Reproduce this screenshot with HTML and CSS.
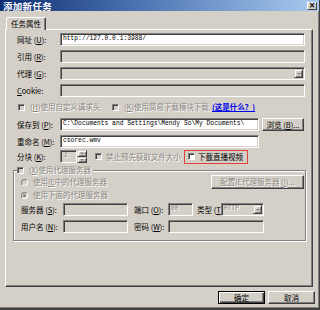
FILE: index.html
```html
<!DOCTYPE html>
<html>
<head>
<meta charset="utf-8">
<title>添加新任务</title>
<link rel="stylesheet" href="styles.css">
</head>
<body>
<div class="window">
  <div class="titlebar">
    <span class="title">添加新任务</span>
    <span class="close">×</span>
  </div>
  <div class="tabs"><div class="tab">任务属性</div></div>
  <div class="panel">
    <div class="form">
      <span class="lbl">网址 (<u>U</u>):</span>
      <div class="field white"><span class="mono">http://127.0.0.1:3988/</span></div>
      <span class="lbl">引用 (<u>R</u>):</span>
      <div class="field"></div>
      <span class="lbl">代理 (<u>G</u>):</span>
      <div class="field combo"><span class="arrow"><i class="tri dis-tri"></i></span></div>
      <span class="lbl"><u>C</u>ookie:</span>
      <div class="field"></div>
    </div>

    <div class="checkrow">
      <div class="citem first"><span class="cb"></span><span class="dis">(<u>H</u>)使用自定义请求头</span></div>
      <div class="citem"><span class="cb"></span><span class="dis">(<u>K</u>)使用简易下载模块下载</span></div>
      <a class="link">(这是什么？)</a>
    </div>

    <div class="row r-save">
      <span class="lbl">保存到 (<u>P</u>):</span>
      <div class="field white w199"><span class="mono">C:\Documents and Settings\Mendy So\My Documents\</span></div>
      <span class="btn browse">浏览 (<u>B</u>)...</span>
    </div>

    <div class="row r-rename">
      <span class="lbl">重命名 (<u>M</u>):</span>
      <div class="field white w199"><span class="mono">csorec.wmv</span></div>
    </div>

    <div class="row r-split">
      <span class="lbl">分块 (<u>K</u>):</span>
      <div class="spin">
        <div class="field spinfield"><span class="dis mono">1</span></div>
        <div class="spinbtns">
          <span class="sbtn"><i class="tri up dis-tri"></i></span>
          <span class="sbtn"><i class="tri dis-tri"></i></span>
        </div>
      </div>
      <div class="citem nosize"><span class="cb"></span><span class="dis">禁止预先获取文件大小</span></div>
      <div class="highlight"><span class="cb white-cb"></span><span class="live">下載直播视频</span></div>
    </div>

    <fieldset class="group">
      <legend><span class="cb"></span><span class="dis">(<u>X</u>)使用代理服务器</span></legend>
      <div class="grow g1">
        <span class="radio"></span><span class="dis">使用<u>IE</u>中的代理服务器</span>
        <span class="btn cfg dis">配置IE代理服务器 (<u>I</u>)...</span>
      </div>
      <div class="grow g2">
        <span class="radio on"></span><span class="dis">使用下面的代理服务器</span>
      </div>
      <div class="grow g3">
        <span class="glbl">服务器 (<u>S</u>):</span>
        <div class="field w65"></div>
        <span class="plbl">端口 (<u>O</u>):</span>
        <div class="field w25"><span class="dis mono">80</span></div>
        <span class="tlbl">类型 (<u>T</u>):</span>
        <div class="field combo w43"><span class="dis mono">HTTP</span><span class="arrow"><i class="tri dis-tri"></i></span></div>
      </div>
      <div class="grow g4">
        <span class="glbl">用户名 (<u>N</u>):</span>
        <div class="field w65"></div>
        <span class="plbl">密码 (<u>W</u>):</span>
        <div class="field w96"></div>
      </div>
    </fieldset>
  </div>
  <div class="buttons">
    <span class="btn default">确定</span>
    <span class="btn">取消</span>
  </div>
</div>
</body>
</html>
```

FILE: styles.css
```css
* { box-sizing: border-box; }
body {
  margin: 0;
  background: #d4d0c8;
  font-family: "Noto Sans CJK SC", sans-serif;
  font-size: 7.5px;
  line-height: 1;
  color: #000;
}
u { text-decoration: underline; }

.window {
  width: 320px;
  height: 310px;
  border-right: 1px solid #404040;
  border-bottom: 2px solid #404040;
  box-shadow: inset -1px -1px #808080;
}

.titlebar {
  height: 11px;
  background: linear-gradient(90deg, #0e2f74 0%, #4f76b4 45%, #a9cbef 100%);
  display: flex;
  align-items: center;
  justify-content: space-between;
  padding: 0 2px 0 3px;
}
.title {
  color: #fff;
  font-weight: bold;
  font-size: 9.5px;
  line-height: 10px;
  letter-spacing: 0.3px;
}
.close {
  width: 10px;
  height: 8px;
  background: #d4d0c8;
  border: 1px solid;
  border-color: #fff #404040 #404040 #fff;
  font-family: "DejaVu Sans", sans-serif;
  font-size: 8px;
  font-weight: bold;
  line-height: 6px;
  text-align: center;
  color: #000;
}

.tabs {
  padding: 6px 0 0 6px;
  height: 18px;
}
.tab {
  position: relative;
  width: 40px;
  height: 13px;
  background: #d4d0c8;
  border-top: 1px solid #fff;
  border-left: 1px solid #fff;
  border-right: 1px solid #404040;
  border-radius: 2px 2px 0 0;
  box-shadow: inset -1px 0 #808080;
  text-align: center;
  line-height: 11px;
  font-size: 7.5px;
  z-index: 1;
}

.panel {
  margin-left: 5px;
  width: 308px;
  height: 258px;
  border-top: 1px solid #fff;
  border-left: 1px solid #fff;
  border-right: 1px solid #404040;
  border-bottom: 1px solid #404040;
  box-shadow: inset -1px -1px #808080;
  padding: 3px 0 0 11px;
}

.form {
  display: grid;
  grid-template-columns: 43px 245px;
  grid-auto-rows: 13px;
  row-gap: 4px;
  align-items: center;
}

.lbl { white-space: nowrap; }

.field {
  height: 13px;
  border: 1px solid;
  border-color: #808080 #fff #fff #808080;
  box-shadow: inset 1px 1px #404040, inset -1px -1px #d4d0c8;
  background: #d4d0c8;
  padding: 0 2px;
  display: flex;
  align-items: center;
  position: relative;
  overflow: hidden;
}
.field.white { background: #fff; }
.mono {
  font-family: "Liberation Mono", monospace;
  font-size: 6.3px;
  white-space: pre;
}
.combo { justify-content: space-between; padding-right: 1px; }
.arrow {
  margin-left: auto;
  width: 9px;
  height: 9px;
  background: #d4d0c8;
  border: 1px solid;
  border-color: #d4d0c8 #404040 #404040 #d4d0c8;
  box-shadow: inset 1px 1px #fff, inset -1px -1px #808080;
  display: flex;
  align-items: center;
  justify-content: center;
}
.tri {
  width: 0;
  height: 0;
  border-left: 2.5px solid transparent;
  border-right: 2.5px solid transparent;
  border-top: 2.5px solid #000;
}
.tri.up { border-top: 0; border-bottom: 2.5px solid #000; }
.dis-tri { border-top-color: #808080; }
.tri.up.dis-tri { border-bottom-color: #808080; }

.dis {
  color: #8a8780;
  text-shadow: 1px 1px #fff;
}

.checkrow {
  margin-top: 5px;
  height: 10px;
  display: flex;
  align-items: center;
  padding-left: 1px;
}
.citem { display: flex; align-items: center; white-space: nowrap; }
.citem.first { width: 94px; }
.citem .cb { margin-right: 5px; }
.cb {
  width: 7px;
  height: 7px;
  flex: none;
  border: 1px solid;
  border-color: #808080 #fff #fff #808080;
  box-shadow: inset 1px 1px #404040;
  background: #d4d0c8;
}
.white-cb { background: #fff; }
.link {
  margin-left: 3px;
  color: #0000ee;
  text-decoration: underline;
  font-weight: bold;
  white-space: nowrap;
}

.row {
  display: flex;
  align-items: center;
  height: 13px;
}
.row .lbl { width: 43px; flex: none; }
.r-save { margin-top: 6px; }
.r-rename { margin-top: 4px; }
.r-split { margin-top: 2px; }
.w199 { width: 199px; }
.w65 { width: 65px; flex: none; }
.w25 { width: 25px; flex: none; }
.w43 { width: 43px; flex: none; }
.w96 { width: 96px; flex: none; }

.btn {
  display: flex;
  align-items: center;
  justify-content: center;
  height: 13px;
  background: #d4d0c8;
  border: 1px solid;
  border-color: #fff #404040 #404040 #fff;
  box-shadow: inset -1px -1px #808080;
  white-space: nowrap;
}
.browse { width: 42px; margin-left: 3px; }

.spin { display: flex; height: 13px; }
.spinfield { width: 17px; padding-left: 3px; }
.spinbtns { width: 10px; display: flex; flex-direction: column; }
.sbtn {
  flex: 1;
  background: #d4d0c8;
  border: 1px solid;
  border-color: #d4d0c8 #404040 #404040 #d4d0c8;
  box-shadow: inset 1px 1px #fff, inset -1px -1px #808080;
  display: flex;
  align-items: center;
  justify-content: center;
}
.nosize { margin-left: 8px; }
.nosize .cb { margin-right: 4px; }
.highlight {
  margin-left: 3px;
  width: 64px;
  height: 14px;
  border: 1px solid #e0403a;
  display: flex;
  align-items: center;
  padding-left: 3px;
}
.highlight .cb { margin-right: 3px; }
.live { white-space: nowrap; }

.group {
  margin: 3px 0 0 -4px;
  width: 293px;
  height: 75px;
  padding: 0 1px 0 7px;
  border: 1px solid #808080;
  box-shadow: inset 1px 1px #fff, 1px 1px #fff;
}
.group legend {
  margin-left: -4px;
  padding: 0 2px 0 0;
  height: 8px;
  display: flex;
  align-items: center;
  background: #d4d0c8;
}
.group legend .cb { margin-right: 5px; }
.grow { display: flex; align-items: center; white-space: nowrap; }
.g1 { height: 14px; margin-top: 1px; }
.g2 { height: 10px; margin-top: 1px; }
.g3 { height: 13px; margin-top: 3px; }
.g4 { height: 13px; margin-top: 4px; }
.radio {
  width: 7px;
  height: 7px;
  flex: none;
  border-radius: 50%;
  border: 1px solid;
  border-color: #808080 #fff #fff #808080;
  background: #d4d0c8;
  margin-right: 5px;
  display: flex;
  align-items: center;
  justify-content: center;
}
.radio.on::after {
  content: "";
  width: 3px;
  height: 3px;
  border-radius: 50%;
  background: #808080;
}
.cfg { margin-left: auto; width: 93px; height: 14px; }
.glbl { width: 42px; flex: none; }
.plbl { width: 34px; margin-left: 6px; flex: none; }
.tlbl { width: 24px; margin-left: 4px; flex: none; }

.buttons {
  display: flex;
  justify-content: flex-end;
  gap: 3px;
  margin-top: 4px;
  padding-right: 4px;
}
.buttons .btn { width: 47px; }
.btn.default {
  border-color: #000;
  box-shadow: inset 1px 1px #fff, inset -1px -1px #404040, inset -2px -2px #808080;
}
```
